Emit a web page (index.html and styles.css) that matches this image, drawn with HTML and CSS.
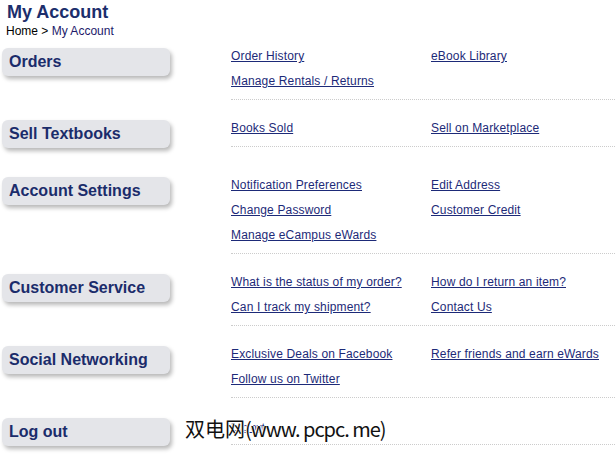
FILE: index.html
```html
<!DOCTYPE html>
<html lang="en">
<head>
    <meta charset="UTF-8">
    <title>My Account</title>
    <link rel="stylesheet" href="styles.css">
</head>
<body>
    <div class="page-head">
        <h1>My Account</h1>
        <div class="crumbs"><a href="#" class="home">Home</a> &gt; <span class="current">My Account</span></div>
    </div>

    <div class="section">
        <div class="side"><h2 class="tab">Orders</h2></div>
        <div class="links">
            <a href="#">Order History</a>
            <a href="#">eBook Library</a>
            <a href="#">Manage Rentals / Returns</a>
        </div>
    </div>

    <div class="section">
        <div class="side"><h2 class="tab">Sell Textbooks</h2></div>
        <div class="links">
            <a href="#">Books Sold</a>
            <a href="#">Sell on Marketplace</a>
        </div>
    </div>

    <div class="section">
        <div class="side"><h2 class="tab">Account Settings</h2></div>
        <div class="links">
            <a href="#">Notification Preferences</a>
            <a href="#">Edit Address</a>
            <a href="#">Change Password</a>
            <a href="#">Customer Credit</a>
            <a href="#">Manage eCampus eWards</a>
        </div>
    </div>

    <div class="section">
        <div class="side"><h2 class="tab">Customer Service</h2></div>
        <div class="links">
            <a href="#">What is the status of my order?</a>
            <a href="#">How do I return an item?</a>
            <a href="#">Can I track my shipment?</a>
            <a href="#">Contact Us</a>
        </div>
    </div>

    <div class="section">
        <div class="side"><h2 class="tab">Social Networking</h2></div>
        <div class="links">
            <a href="#">Exclusive Deals on Facebook</a>
            <a href="#">Refer friends and earn eWards</a>
            <a href="#">Follow us on Twitter</a>
        </div>
    </div>

    <div class="section">
        <div class="side"><h2 class="tab">Log out</h2></div>
        <div class="links">
            <a href="#" class="small">Log out</a>
        </div>
    </div>

    <div class="watermark">双电网<span class="latin">(www. pcpc. me)</span></div>
</body>
</html>
```

FILE: styles.css
```css
body {
    font-family: "Liberation Sans", Arial, sans-serif;
    margin: 0;
    padding: 0;
    background-color: #ffffff;
    color: #000000;
    position: relative;
    overflow: hidden;
}

.page-head {
    padding: 2px 0 0 7px;
    height: 46px;
}

.page-head h1 {
    font-size: 18px;
    line-height: 21px;
    margin: 0;
    color: #1c2e6c;
}

.crumbs {
    font-size: 12px;
    line-height: 15px;
    margin: 1px 0 0 -1px;
}

.crumbs a.home {
    color: #000000;
    text-decoration: none;
}

.crumbs .current {
    color: #221a6a;
}

.section {
    display: flex;
    align-items: flex-start;
    margin-bottom: 20px;
}

.side {
    width: 231px;
    flex-shrink: 0;
}

.tab {
    width: 161px;
    height: 28px;
    margin: 0 0 9px 2px;
    padding-left: 7px;
    font-size: 16px;
    line-height: 28px;
    color: #1b2c6b;
    background-color: #e4e5e9;
    border-radius: 6px;
    box-shadow: 2px 3px 4px rgba(0, 0, 0, 0.28);
}

.links {
    flex: 1;
    display: grid;
    grid-template-columns: 200px 200px;
    grid-auto-rows: 25px;
    padding-bottom: 1px;
    border-bottom: 1px dotted #cccccc;
}

.links a {
    font-size: 12px;
    line-height: 15px;
    padding-top: 1px;
    letter-spacing: 0.15px;
    color: #1d2a78;
    text-decoration: underline;
    white-space: nowrap;
}

.links a.small {
    font-size: 11px;
    letter-spacing: -0.5px;
    padding-top: 2px;
}

.watermark {
    position: absolute;
    left: 185px;
    top: 416px;
    font-family: "Noto Sans CJK SC", "Liberation Sans", sans-serif;
    font-size: 20px;
    line-height: 26px;
    color: #111111;
    text-shadow: 1px 0 0 #ffffff, -1px 0 0 #ffffff, 0 1px 0 #ffffff, 0 -1px 0 #ffffff;
}

.watermark .latin {
    letter-spacing: -1px;
}
```
